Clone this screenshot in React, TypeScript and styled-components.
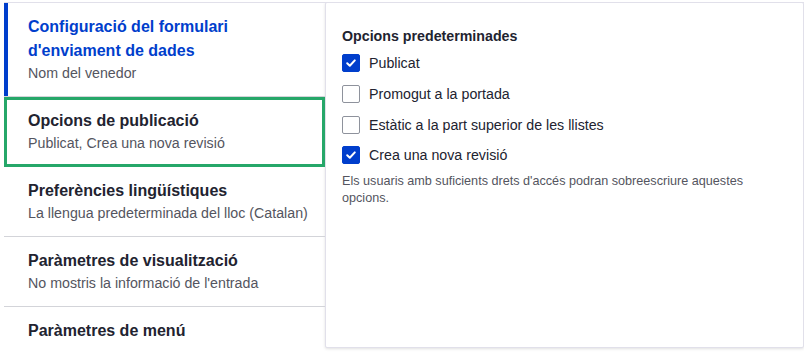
import styled, { createGlobalStyle } from 'styled-components'

const GlobalStyle = createGlobalStyle`
  html, body {
    margin: 0;
    padding: 0;
    background: #ffffff;
  }
  body {
    font-family: "Liberation Sans", Arial, sans-serif;
    color: #222330;
  }
`

type Tab = {
  title: string
  summary?: string
  selected?: boolean
  focused?: boolean
}

const tabs: Tab[] = [
  { title: "Configuració del formulari d'enviament de dades", summary: 'Nom del venedor', selected: true },
  { title: 'Opcions de publicació', summary: 'Publicat, Crea una nova revisió', focused: true },
  { title: 'Preferències lingüístiques', summary: 'La llengua predeterminada del lloc (Catalan)' },
  { title: 'Paràmetres de visualització', summary: "No mostris la informació de l'entrada" },
  { title: 'Paràmetres de menú' },
]

const options = [
  { label: 'Publicat', checked: true },
  { label: 'Promogut a la portada', checked: false },
  { label: 'Estàtic a la part superior de les llistes', checked: false },
  { label: 'Crea una nova revisió', checked: true },
]

const App = () => {
  return (
    <>
      <GlobalStyle />
      <Wrapper>
        <TabList>
          {tabs.map((t) => (
            <TabItem key={t.title} $selected={t.selected} $focused={t.focused}>
              <TabTitle $selected={t.selected}>{t.title}</TabTitle>
              {t.summary && <TabSummary>{t.summary}</TabSummary>}
            </TabItem>
          ))}
        </TabList>
        <Panel>
          <Legend>Opcions predeterminades</Legend>
          <Options>
            {options.map((o) => (
              <OptionRow key={o.label}>
                <Box $checked={o.checked}>
                  {o.checked && (
                    <svg width="12" height="12" viewBox="0 0 12 12">
                      <path d="M2.2 6.3 L4.8 8.8 L9.8 3.4" fill="none" stroke="#fff" strokeWidth="2" strokeLinecap="round" strokeLinejoin="round" />
                    </svg>
                  )}
                </Box>
                <OptionLabel>{o.label}</OptionLabel>
              </OptionRow>
            ))}
          </Options>
          <Description>
            Els usuaris amb suficients drets d'accés podran sobreescriure aquestes opcions.
          </Description>
        </Panel>
      </Wrapper>
    </>
  )
}

export default App

const Wrapper = styled.div`
  display: flex;
  margin: 2px 4px 0 4px;
  border-top: 1px solid #e1e0ea;
  height: 353px;
  overflow: hidden;
`

const TabList = styled.div`
  width: 321px;
  flex: none;
  display: flex;
  flex-direction: column;
`

const TabItem = styled.div<{ $selected?: boolean; $focused?: boolean }>`
  padding: 12px 12px 13px 24px;
  border-bottom: 1px solid #d3d4d9;
  box-shadow: ${(p) => (p.$selected ? 'inset 4px 0 0 #003ecc' : 'none')};
  outline: ${(p) => (p.$focused ? '3px solid #26a769' : 'none')};
  outline-offset: -3px;
  position: relative;
`

const TabTitle = styled.div<{ $selected?: boolean }>`
  font-size: 16px;
  font-weight: 700;
  line-height: 24px;
  color: ${(p) => (p.$selected ? '#003ecc' : '#222330')};
  max-width: 280px;
`

const TabSummary = styled.div`
  font-size: 14.22px;
  line-height: 20px;
  color: #545560;
`

const Panel = styled.div`
  flex: 1;
  margin-top: -1px;
  background: #fff;
  border: 1px solid #e1e0ea;
  border-radius: 2px;
  box-shadow: 0 1px 3px rgba(0, 0, 0, 0.12);
  padding: 24px 16px 0 16px;
  box-sizing: border-box;
  height: 346px;
`

const Legend = styled.div`
  font-size: 14.22px;
  font-weight: 700;
  line-height: 18px;
  color: #222330;
  margin-bottom: 3px;
`

const Options = styled.div`
  display: flex;
  flex-direction: column;
`

const OptionRow = styled.div`
  display: flex;
  align-items: center;
  gap: 9px;
  height: 30.67px;
`

const Box = styled.span<{ $checked?: boolean }>`
  width: 18px;
  height: 18px;
  box-sizing: border-box;
  border-radius: 2px;
  display: flex;
  align-items: center;
  justify-content: center;
  background: ${(p) => (p.$checked ? '#003ecc' : '#fff')};
  border: 1px solid ${(p) => (p.$checked ? '#003ecc' : '#8e929c')};
`

const OptionLabel = styled.span`
  font-size: 14.22px;
  line-height: 18px;
  color: #222330;
`

const Description = styled.div`
  margin-top: 2px;
  font-size: 12.64px;
  line-height: 17px;
  color: #545560;
  max-width: 440px;
`
